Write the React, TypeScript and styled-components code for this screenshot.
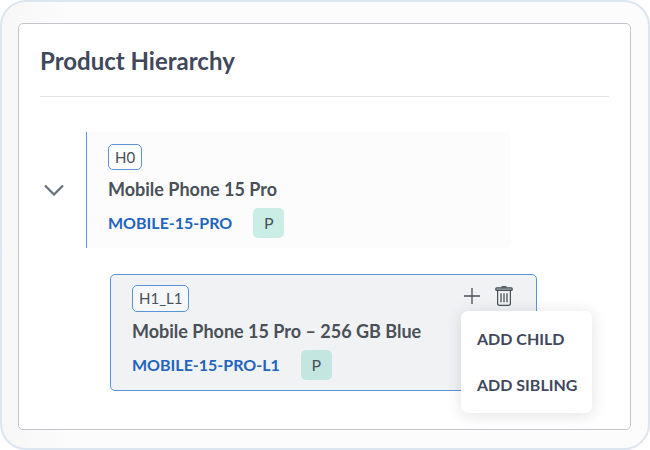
import React from "react";
import styled, { createGlobalStyle } from "styled-components";

const GlobalStyle = createGlobalStyle`
  * {
    box-sizing: border-box;
  }

  body {
    margin: 0;
    background: #ffffff;
    font-family: Lato, "Open Sans", sans-serif;
    color: #495057;
  }

  button {
    font-family: inherit;
    cursor: pointer;
  }
`;

const Frame = styled.main`
  display: flex;
  min-height: 100vh;
  padding: 21px 17px 18px 16px;
  border: 2px solid #dce6f0;
  border-radius: 26px;
  background: linear-gradient(to right, #f7f7f7, #fcfcfc 72px);
`;

const Panel = styled.section`
  flex: 1;
  min-width: 0;
  padding: 20px 21px;
  border: 1px solid #c5c6cc;
  border-radius: 5px;
  background: #ffffff;
`;

const Title = styled.h1`
  margin: 0;
  padding-bottom: 18px;
  border-bottom: 1px solid #e6e6e8;
  color: #3f485c;
  font-size: 24px;
  font-weight: 700;
  line-height: 34px;
`;

const Tree = styled.div`
  display: flex;
  flex-direction: column;
  gap: 26px;
  padding: 35px 72px 0 0;
`;

const Branch = styled.div`
  display: flex;
  align-items: center;
  gap: 19px;
  padding-right: 26px;
`;

const Children = styled.div`
  padding-left: 70px;
`;

const Toggle = styled.button`
  display: flex;
  align-items: center;
  justify-content: center;
  width: 27px;
  height: 26px;
  padding: 0;
  border: 0;
  background: none;
  color: #64707a;
`;

const Node = styled.article<{ $selected?: boolean }>`
  position: relative;
  flex: 1;
  padding: ${(p) => (p.$selected ? "10px 21px" : "12px 21px 10px")};
  border: solid #5b93d9;
  border-width: ${(p) => (p.$selected ? "1px" : "0 0 0 1px")};
  border-radius: ${(p) => (p.$selected ? "5px" : "0 5px 5px 0")};
  background: ${(p) => (p.$selected ? "#f1f2f4" : "#fcfcfc")};
`;

const NodeHead = styled.div<{ $selected?: boolean }>`
  display: flex;
  align-items: stretch;
  justify-content: space-between;
  height: ${(p) => (p.$selected ? "27px" : "26px")};
`;

const Level = styled.span`
  padding: 0 6px;
  border: 1px solid #5b93d9;
  border-radius: 5px;
  background: #ffffff66;
  font-size: 15px;
  line-height: 25px;
`;

const Name = styled.h2`
  margin: 0;
  padding: 7px 0;
  font-size: 18px;
  font-weight: 700;
  line-height: 24px;
`;

const NodeFoot = styled.div`
  display: flex;
  align-items: center;
  gap: 21px;
`;

const Code = styled.a`
  color: #2264bd;
  font-size: 16px;
  font-weight: 700;
  line-height: 24px;
  text-decoration: none;
`;

const Badge = styled.span<{ $deep?: boolean }>`
  width: 31px;
  border-radius: 5px;
  background: ${(p) => (p.$deep ? "#c3e6e1" : "#caeee6")};
  font-size: 16px;
  line-height: 30px;
  text-align: center;
`;

const Actions = styled.div`
  position: relative;
  display: flex;
  align-items: flex-start;
  gap: 11px;
  padding-right: 1px;
`;

const IconButton = styled.button`
  display: flex;
  align-items: center;
  justify-content: center;
  width: 21px;
  height: 22px;
  padding: 0;
  border: 0;
  background: none;
  color: #495057;
`;

const Menu = styled.div`
  position: absolute;
  top: 26px;
  left: 0;
  display: flex;
  flex-direction: column;
  padding: 5px 0;
  border-radius: 7px;
  background: #ffffff;
  box-shadow: 0 2px 16px rgba(40, 45, 60, 0.14);
`;

const MenuItem = styled.button`
  padding: 0 15px 0 16px;
  border: 0;
  background: none;
  color: #3f485c;
  font-size: 16px;
  font-weight: 700;
  line-height: 46px;
  text-align: left;
  white-space: nowrap;
`;

const ChevronIcon = () => (
  <svg width="20" height="12" viewBox="0 0 20 12" fill="none" stroke="currentColor" strokeWidth="2.2" aria-hidden="true">
    <path d="M1 1.5l9 9 9-9" />
  </svg>
);

const PlusIcon = () => (
  <svg width="16" height="16" viewBox="0 0 16 16" fill="none" stroke="currentColor" strokeWidth="1.3" aria-hidden="true">
    <path d="M8 0v16M0 8h16" />
  </svg>
);

const TrashIcon = () => (
  <svg width="18" height="20" viewBox="0 0 18 20" fill="none" stroke="currentColor" strokeWidth="1.2" aria-hidden="true">
    <path d="M6.5 .8h5" strokeWidth="1.4" />
    <rect x="0.8" y="1.8" width="16.4" height="2.6" rx="0.9" fill="#a4aab0" />
    <path d="M2.6 4.6v12.7q0 2 2 2h8.8q2 0 2-2V4.6" />
    <path d="M6 7.3v9M9 7.3v9M12 7.3v9" strokeWidth="1.3" />
  </svg>
);

export default function App() {
  return (
    <>
      <GlobalStyle />
      <Frame>
        <Panel>
          <Title>Product Hierarchy</Title>
          <Tree>
            <Branch>
              <Toggle aria-label="Collapse Mobile Phone 15 Pro" aria-expanded="true">
                <ChevronIcon />
              </Toggle>
              <Node>
                <NodeHead>
                  <Level>H0</Level>
                </NodeHead>
                <Name>Mobile Phone 15 Pro</Name>
                <NodeFoot>
                  <Code href="#mobile-15-pro">MOBILE-15-PRO</Code>
                  <Badge>P</Badge>
                </NodeFoot>
              </Node>
            </Branch>
            <Children>
              <Node $selected>
                <NodeHead $selected>
                  <Level>H1_L1</Level>
                  <Actions>
                    <IconButton aria-label="Add" aria-haspopup="menu" aria-expanded="true">
                      <PlusIcon />
                    </IconButton>
                    <IconButton aria-label="Delete">
                      <TrashIcon />
                    </IconButton>
                    <Menu role="menu">
                      <MenuItem role="menuitem">ADD CHILD</MenuItem>
                      <MenuItem role="menuitem">ADD SIBLING</MenuItem>
                    </Menu>
                  </Actions>
                </NodeHead>
                <Name>Mobile Phone 15 Pro – 256 GB Blue</Name>
                <NodeFoot>
                  <Code href="#mobile-15-pro-l1">MOBILE-15-PRO-L1</Code>
                  <Badge $deep>P</Badge>
                </NodeFoot>
              </Node>
            </Children>
          </Tree>
        </Panel>
      </Frame>
    </>
  );
}
